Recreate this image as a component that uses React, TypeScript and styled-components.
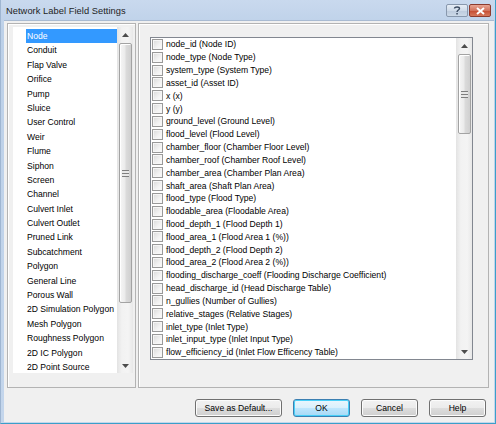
import React from "react";
import styled, { createGlobalStyle } from "styled-components";

const Global = createGlobalStyle`
  html, body { margin: 0; padding: 0; background: #f0f0f0; }
  body { font-family: "Liberation Sans", Arial, sans-serif; }
  * { box-sizing: border-box; }
`;

const Window = styled.div`
  width: 496px;
  height: 424px;
  display: flex;
  flex-direction: column;
  background: linear-gradient(#c9d9ee, #bcd0e8 30px, #c4d6ec);
  border-right: 1px solid #3a9fc9;
  border-bottom: 1px solid #3a9fc9;
  border-left: 1px solid #9fb6d2;
  overflow: hidden;
`;

const TitleBar = styled.div`
  height: 20px;
  display: flex;
  align-items: center;
  padding: 0 4px 0 5px;
  flex-shrink: 0;
`;

const Title = styled.div`
  flex: 1;
  font-size: 9.3px;
  color: #1e1e1e;
  padding-top: 1px;
  letter-spacing: 0.05px;
`;

const CaptionButton = styled.div<{ $close?: boolean }>`
  width: 22px;
  height: 13px;
  margin-top: 1px;
  border-radius: 2px;
  border: 1px solid ${(p) => (p.$close ? "#8c3b2e" : "#8898ad")};
  background: ${(p) =>
    p.$close
      ? "linear-gradient(#e8a593, #d2735d 50%, #c44a30 51%, #d6785c)"
      : "linear-gradient(#e6edf6, #cfdbe9 50%, #bccbdd 51%, #ccd9e8)"};
  display: flex;
  align-items: center;
  justify-content: center;
  & + & { margin-left: 1px; }
`;

const Body = styled.div`
  flex: 1;
  margin: 0 1px 2px 3px;
  background: #f0f0f0;
  border-top: 1px solid #a9bbd2;
  display: flex;
  flex-direction: column;
  padding: 2px 5px 5px 3px;
`;

const Panels = styled.div`
  height: 365px;
  display: flex;
  gap: 2px;
`;

const Group = styled.div<{ $w: number; $pl: number; $pt: number }>`
  width: ${(p) => p.$w}px;
  height: 100%;
  border: 1px solid #b3b3b3;
  box-shadow: inset 1px 1px 0 #fff;
  padding: ${(p) => p.$pt}px 0 0 ${(p) => p.$pl}px;
`;

const ListBox = styled.div`
  width: 120px;
  height: 346px;
  display: flex;
  background: #fff;
`;

const Items = styled.div`
  flex: 1;
  padding-top: 2px;
  padding-left: 13px;
  overflow: hidden;
`;

const Item = styled.div<{ $sel?: boolean }>`
  height: 14.4px;
  line-height: 14.4px;
  font-size: 8.6px;
  padding-left: 1px;
  white-space: nowrap;
  color: ${(p) => (p.$sel ? "#fff" : "#000")};
  background: ${(p) => (p.$sel ? "#3399ff" : "transparent")};
`;

const CheckList = styled.div`
  width: 323px;
  height: 323px;
  border: 1px solid #828790;
  background: #fff;
  display: flex;
`;

const Rows = styled.div`
  flex: 1;
  padding-left: 1px;
  overflow: hidden;
`;

const Row = styled.div`
  height: 12.83px;
  display: flex;
  align-items: center;
  gap: 3px;
  font-size: 8.6px;
  white-space: nowrap;
  color: #000;
`;

const Check = styled.span`
  width: 11px;
  height: 11px;
  flex-shrink: 0;
  border: 1px solid #999;
  background: linear-gradient(135deg, #d9d9d9, #f2f2f2 60%, #fbfbfb);
  box-shadow: inset 0 0 0 1px #f6f6f6;
`;

const ScrollBar = styled.div`
  width: 16px;
  height: 100%;
  display: flex;
  flex-direction: column;
  align-items: center;
  background: linear-gradient(90deg, #e3e3e3, #f2f2f2 30%, #f4f4f4 70%, #e8e8e8);
`;

const Arrow = styled.div`
  height: 15px;
  width: 100%;
  display: flex;
  align-items: center;
  justify-content: center;
  flex-shrink: 0;
`;

const Track = styled.div`
  flex: 1;
  width: 100%;
  display: flex;
  flex-direction: column;
  align-items: center;
`;

const Thumb = styled.div<{ $h: number }>`
  width: 13px;
  height: ${(p) => p.$h}px;
  margin-top: 1px;
  border: 1px solid #a3a3a3;
  border-radius: 2px;
  background: linear-gradient(90deg, #f6f6f6, #ebebeb 45%, #dbdbdb 55%, #d0d0d0);
  box-shadow: inset 1px 1px 0 #fff;
  display: flex;
  align-items: center;
  justify-content: center;
`;

const Grip = styled.div`
  width: 7px;
  height: 7px;
  background: repeating-linear-gradient(#7f7f7f 0 1px, #e8e8e8 1px 3px);
`;

const Buttons = styled.div`
  margin-top: 11px;
  display: flex;
  justify-content: flex-end;
  gap: 11px;
  padding-right: 3px;
`;

const Button = styled.button<{ $w: number; $def?: boolean }>`
  width: ${(p) => p.$w}px;
  height: 18px;
  padding: 0;
  font-family: "Liberation Sans", Arial, sans-serif;
  font-size: 8.6px;
  color: #000;
  border: 1px solid ${(p) => (p.$def ? "#3c7fb1" : "#707070")};
  border-radius: 3px;
  background: ${(p) =>
    p.$def
      ? "linear-gradient(#eaf6fd, #d9f0fc 50%, #bee6fd 51%, #a7d9f5)"
      : "linear-gradient(#f2f2f2, #ebebeb 50%, #dddddd 51%, #cfcfcf)"};
  box-shadow: inset 0 0 0 1px ${(p) => (p.$def ? "#48d0f8" : "#fcfcfc")};
`;

const Tri = ({ up }: { up?: boolean }) => (
  <svg width="7" height="4" viewBox="0 0 7 4">
    <path d={up ? "M3.5 0 L7 4 L0 4 Z" : "M0 0 L7 0 L3.5 4 Z"} fill="#4d4d4d" />
  </svg>
);

const Bar = ({ thumb }: { thumb: number }) => (
  <ScrollBar>
    <Arrow>
      <Tri up />
    </Arrow>
    <Track>
      <Thumb $h={thumb}>
        <Grip />
      </Thumb>
    </Track>
    <Arrow>
      <Tri />
    </Arrow>
  </ScrollBar>
);

const leftItems = [
  "Node",
  "Conduit",
  "Flap Valve",
  "Orifice",
  "Pump",
  "Sluice",
  "User Control",
  "Weir",
  "Flume",
  "Siphon",
  "Screen",
  "Channel",
  "Culvert Inlet",
  "Culvert Outlet",
  "Pruned Link",
  "Subcatchment",
  "Polygon",
  "General Line",
  "Porous Wall",
  "2D Simulation Polygon",
  "Mesh Polygon",
  "Roughness Polygon",
  "2D IC Polygon",
  "2D Point Source",
];

const fields = [
  "node_id (Node ID)",
  "node_type (Node Type)",
  "system_type (System Type)",
  "asset_id (Asset ID)",
  "x (x)",
  "y (y)",
  "ground_level (Ground Level)",
  "flood_level (Flood Level)",
  "chamber_floor (Chamber Floor Level)",
  "chamber_roof (Chamber Roof Level)",
  "chamber_area (Chamber Plan Area)",
  "shaft_area (Shaft Plan Area)",
  "flood_type (Flood Type)",
  "floodable_area (Floodable Area)",
  "flood_depth_1 (Flood Depth 1)",
  "flood_area_1 (Flood Area 1 (%))",
  "flood_depth_2 (Flood Depth 2)",
  "flood_area_2 (Flood Area 2 (%))",
  "flooding_discharge_coeff (Flooding Discharge Coefficient)",
  "head_discharge_id (Head Discharge Table)",
  "n_gullies (Number of Gullies)",
  "relative_stages (Relative Stages)",
  "inlet_type (Inlet Type)",
  "inlet_input_type (Inlet Input Type)",
  "flow_efficiency_id (Inlet Flow Efficency Table)",
];

export default function App() {
  return (
    <>
      <Global />
      <Window>
        <TitleBar>
          <Title>Network Label Field Settings</Title>
          <CaptionButton>
            <svg width="8" height="9" viewBox="0 0 8 9">
              <path
                d="M1.5 2.5 C1.5 0.5 6.5 0.5 6.5 2.5 C6.5 4 4 4 4 6"
                stroke="#3a4a60"
                strokeWidth="1.4"
                fill="none"
              />
              <rect x="3.3" y="7" width="1.5" height="1.5" fill="#3a4a60" />
            </svg>
          </CaptionButton>
          <CaptionButton $close>
            <svg width="9" height="8" viewBox="0 0 9 8">
              <path d="M1 1 L8 7 M8 1 L1 7" stroke="#fff" strokeWidth="2" />
            </svg>
          </CaptionButton>
        </TitleBar>
        <Body>
          <Panels>
            <Group $w={129} $pl={5} $pt={3}>
              <ListBox>
                <Items>
                  {leftItems.map((t, i) => (
                    <Item key={t} $sel={i === 0}>
                      {t}
                    </Item>
                  ))}
                </Items>
                <Bar thumb={260} />
              </ListBox>
            </Group>
            <Group $w={351} $pl={11} $pt={13}>
              <CheckList>
                <Rows>
                  {fields.map((f) => (
                    <Row key={f}>
                      <Check />
                      {f}
                    </Row>
                  ))}
                </Rows>
                <Bar thumb={80} />
              </CheckList>
            </Group>
          </Panels>
          <Buttons>
            <Button $w={87}>Save as Default...</Button>
            <Button $w={57} $def>
              OK
            </Button>
            <Button $w={57}>Cancel</Button>
            <Button $w={57}>Help</Button>
          </Buttons>
        </Body>
      </Window>
    </>
  );
}
